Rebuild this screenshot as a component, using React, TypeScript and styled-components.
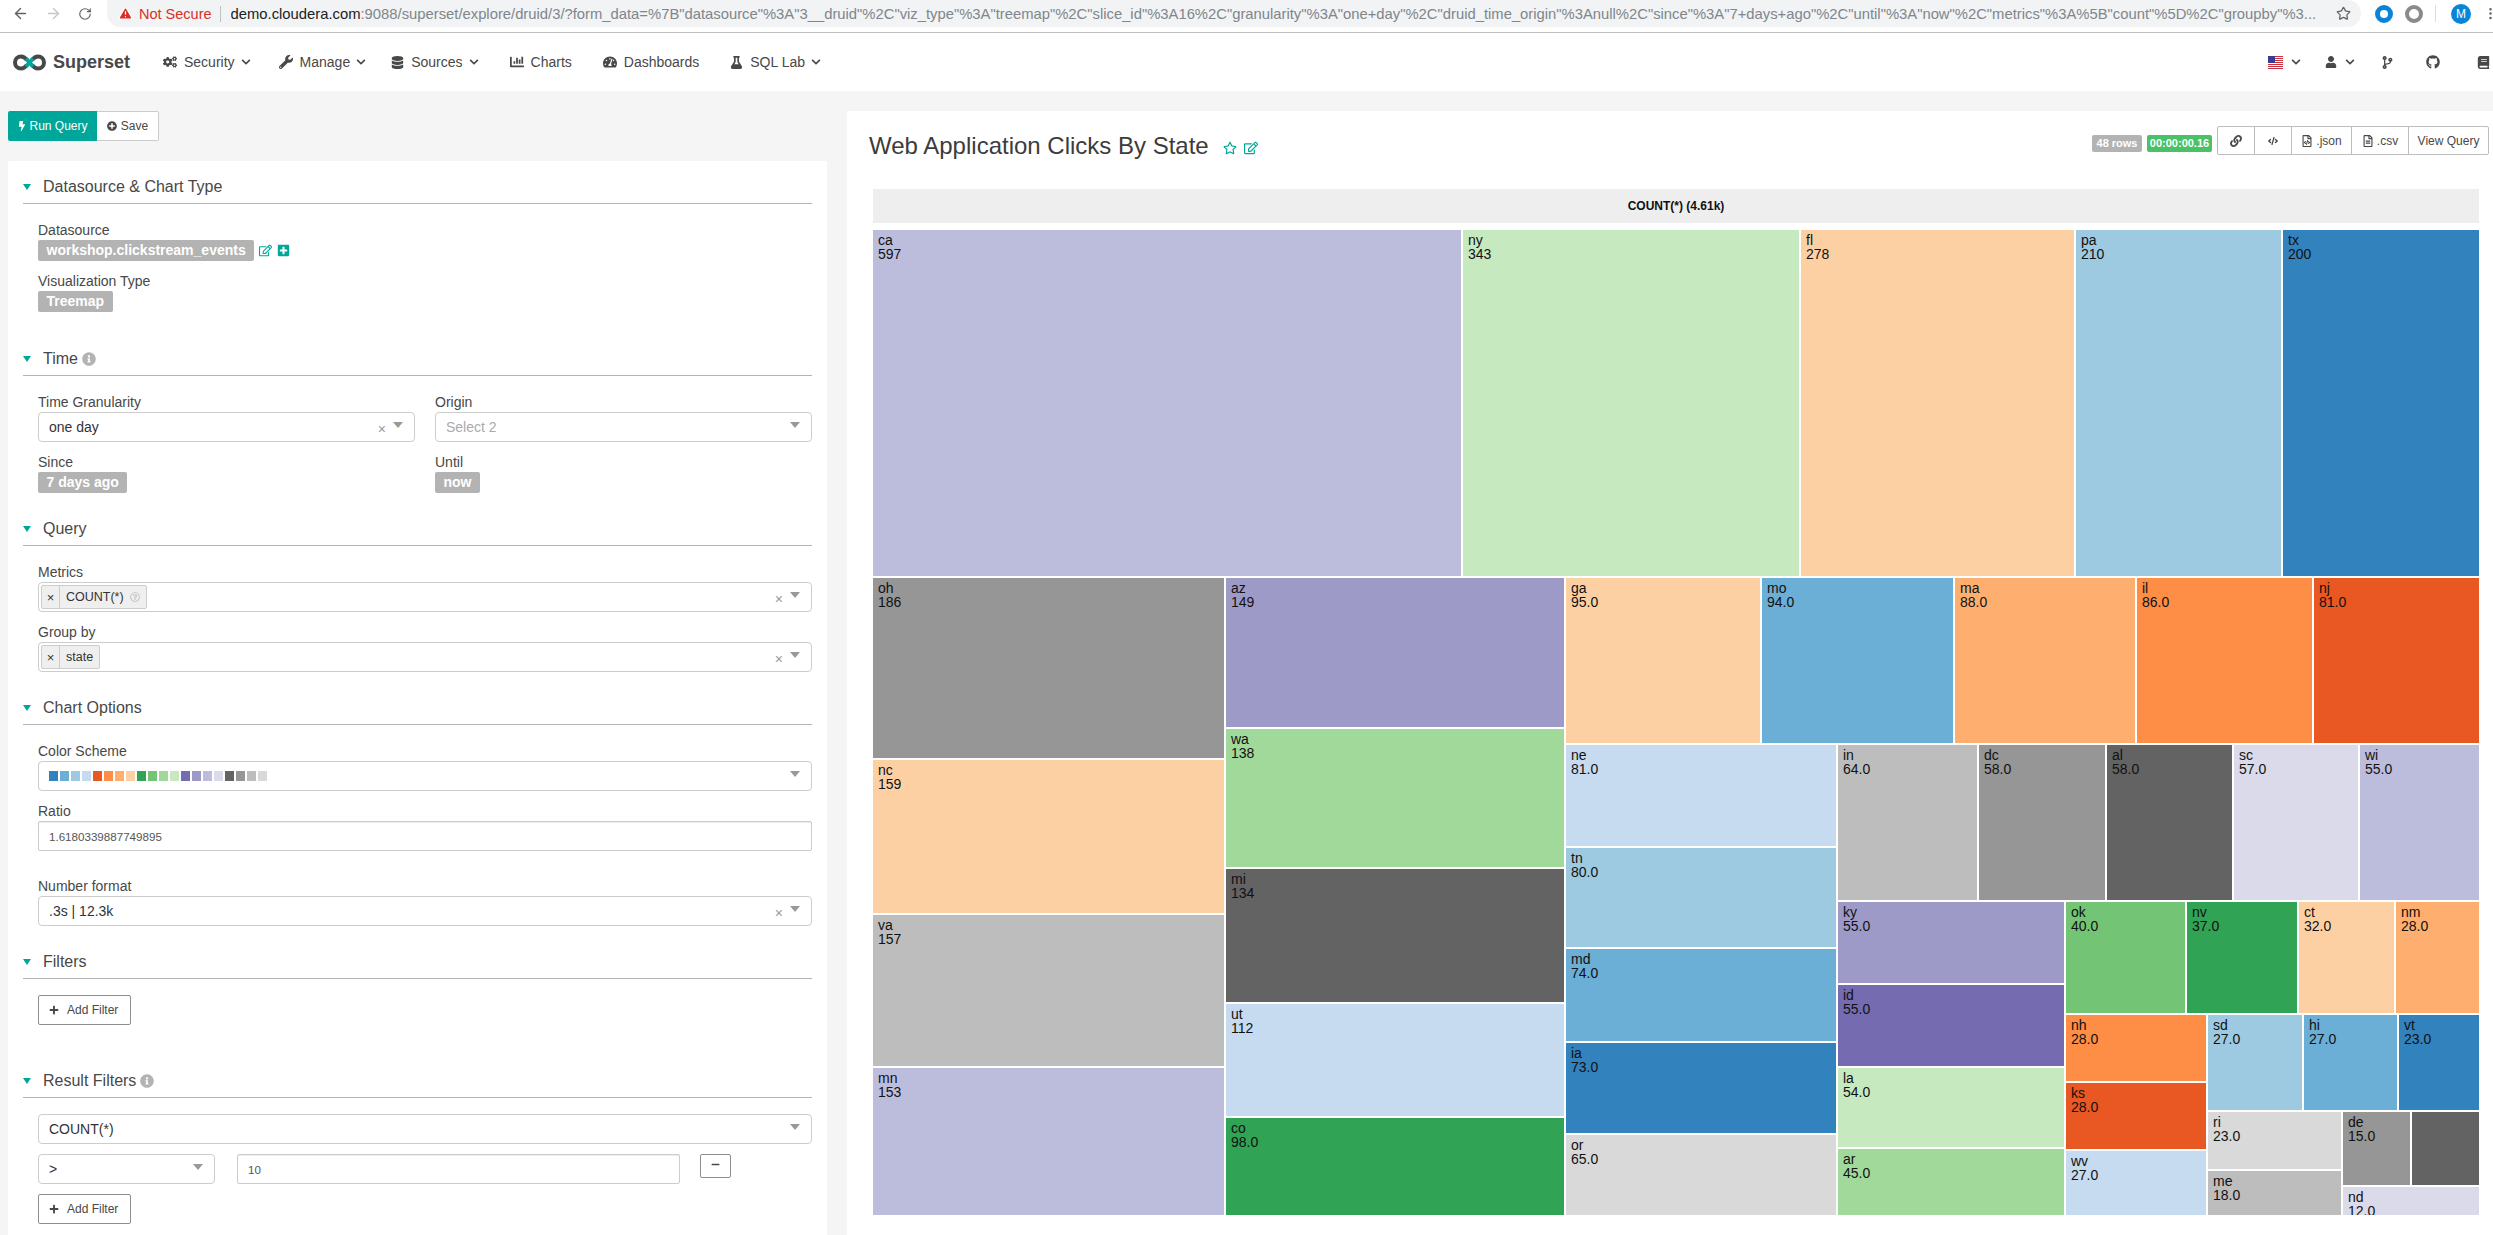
import React from "react";
import styled, { createGlobalStyle } from "styled-components";
import {
  FaBolt, FaBook, FaChartBar, FaChevronDown, FaCodeBranch, FaCode, FaCogs, FaDatabase, FaFlask, FaGithub,
  FaInfoCircle, FaLink, FaMinus, FaPlus, FaPlusCircle, FaPlusSquare, FaRegEdit, FaRegFileAlt, FaRegFileCode,
  FaRegQuestionCircle, FaRegStar, FaTachometerAlt, FaUser, FaWrench,
} from "react-icons/fa";
import { ArrowLeft, ArrowRight, EllipsisVertical, RotateCw, Star, TriangleAlert } from "lucide-react";

const TEAL = "#00a699";
const INK = "#484848";

const GlobalStyle = createGlobalStyle`
  html, body { margin: 0; padding: 0; height: 100%; overflow: hidden; background: #f5f5f5; }
  body { font-family: "Liberation Sans", Arial, sans-serif; color: ${INK}; }
  * { box-sizing: border-box; }
`;

const Page = styled.div`
  width: 2493px;
  height: 1235px;
  display: flex;
  flex-direction: column;
  overflow: hidden;
`;

/* Browser chrome */
const BrowserBar = styled.div`
  height: 33px;
  flex: none;
  display: flex;
  align-items: flex-start;
  background: #fff;
  border-bottom: 1px solid #bdbdbd;
`;
const BrowserNav = styled.div`
  width: 107px;
  height: 27px;
  padding-left: 12px;
  display: flex;
  align-items: center;
  gap: 16px;
  flex: none;
`;
const AddressPill = styled.div`
  width: 2254px;
  height: 27px;
  flex: none;
  display: flex;
  align-items: center;
  background: #f1f3f4;
  border-radius: 0 14px 14px 14px;
  padding: 0 10px 0 11px;
  font-size: 14px;
  white-space: nowrap;
`;
const NotSecure = styled.span`
  color: #d93025;
  margin-left: 6px;
  font-size: 14.5px;
`;
const AddressDivider = styled.span`
  width: 1px;
  height: 16px;
  background: #bdc1c6;
  margin: 0 10px 0 8px;
`;
const Url = styled.span`
  color: #80868b;
  flex: none;
  width: 2095px;
  overflow: hidden;
  font-size: 14.8px;
  b { color: #202124; font-weight: 400; }
`;
const UrlStar = styled.span`
  display: flex;
  margin-left: auto;
  color: #5f6368;
`;
const BrowserExt = styled.div`
  height: 27px;
  display: flex;
  align-items: center;
  padding-left: 14px;
  gap: 12px;
`;
const ExtRing = styled.span<{ $color: string; $border: number }>`
  width: 18px;
  height: 18px;
  border-radius: 50%;
  border: ${(p) => p.$border}px solid ${(p) => p.$color};
  background: #fff;
`;
const ExtDivider = styled.span`
  width: 1px;
  height: 17px;
  background: #dadce0;
`;
const Avatar = styled.span`
  width: 20px;
  height: 20px;
  border-radius: 50%;
  background: #0a84d6;
  color: #fff;
  font-size: 12px;
  display: flex;
  align-items: center;
  justify-content: center;
  margin-left: 3px;
`;

/* Superset navbar */
const Navbar = styled.nav`
  height: 58px;
  flex: none;
  display: flex;
  align-items: center;
  background: #fff;
  padding: 0 3px 0 13px;
`;
const Brand = styled.div`
  display: flex;
  align-items: center;
  gap: 7px;
  width: 150px;
  font-size: 18px;
  font-weight: 700;
  color: ${INK};
`;
const NavList = styled.div`
  display: flex;
  align-items: center;
`;
const NavItem = styled.span<{ $after: number }>`
  display: flex;
  align-items: center;
  gap: 7px;
  font-size: 14px;
  color: ${INK};
  margin-right: ${(p) => p.$after}px;
  svg { flex: none; }
`;
const Caret = styled(FaChevronDown)`
  width: 10px;
  height: 10px;
  margin-left: -1px;
`;
const NavRight = styled.div`
  margin-left: auto;
  display: flex;
  align-items: center;
  color: ${INK};
  height: 100%;
`;
const NavGroup = styled.span<{ $width: number }>`
  width: ${(p) => p.$width}px;
  display: flex;
  align-items: center;
  gap: 9px;
  svg { flex: none; }
`;

/* Main area */
const Main = styled.main`
  flex: 1;
  min-height: 0;
  display: grid;
  grid-template-columns: 819px 1fr;
  column-gap: 20px;
  padding: 20px 0 0 8px;
`;
const LeftColumn = styled.div`
  display: flex;
  flex-direction: column;
  min-height: 0;
`;
const QueryBar = styled.div`
  height: 30px;
  flex: none;
  display: flex;
  margin-bottom: 20px;
`;
const RunButton = styled.button`
  width: 89px;
  height: 30px;
  border: 0;
  border-radius: 2px 0 0 2px;
  background: ${TEAL};
  color: #fff;
  font: 12px "Liberation Sans", Arial, sans-serif;
  display: flex;
  align-items: center;
  justify-content: center;
  gap: 2px;
  padding: 0;
`;
const SaveButton = styled.button`
  width: 62px;
  height: 30px;
  border: 1px solid #ccc;
  border-left: 0;
  border-radius: 0 2px 2px 0;
  background: #fff;
  color: ${INK};
  font: 12px "Liberation Sans", Arial, sans-serif;
  display: flex;
  align-items: center;
  justify-content: center;
  gap: 4px;
  padding: 0;
`;
const ControlPanel = styled.div`
  flex: 1;
  min-height: 0;
  overflow: hidden;
  background: #fff;
  border-radius: 2px 2px 0 0;
`;
const Section = styled.section<{ $extra?: number }>`
  padding: 14px 15px ${(p) => p.$extra ?? 0}px;
`;
const SectionHeader = styled.h2`
  margin: 0;
  height: 29px;
  display: flex;
  align-items: flex-start;
  border-bottom: 1px solid #b3b3b3;
  font-size: 16px;
  font-weight: 400;
  line-height: 24px;
  color: ${INK};
`;
const Triangle = styled.span`
  width: 0;
  height: 0;
  margin: 9px 12px 0 0;
  border-left: 4.5px solid transparent;
  border-right: 4.5px solid transparent;
  border-top: 6px solid ${TEAL};
`;
const InfoIcon = styled(FaInfoCircle)`
  color: #b3b3b3;
  width: 14px;
  height: 14px;
  margin: 5px 0 0 4px;
`;
const SectionBody = styled.div`
  padding: 16px 0 0 15px;
`;
const Field = styled.div<{ $after?: number }>`
  margin-bottom: ${(p) => p.$after ?? 10}px;
`;
const FieldGrid = styled.div`
  display: grid;
  grid-template-columns: 377px 377px;
  column-gap: 20px;
`;
const Label = styled.label`
  display: block;
  height: 20px;
  line-height: 20px;
  font-size: 14px;
  color: ${INK};
`;
const BadgeRow = styled.div`
  display: flex;
  align-items: center;
  height: 21px;
  gap: 5px;
`;
const ValueBadge = styled.span`
  display: inline-block;
  height: 21px;
  line-height: 21px;
  padding: 0 8.5px;
  background: #b3b3b3;
  color: #fff;
  font-size: 14px;
  font-weight: 700;
  border-radius: 2px;
`;
const SelectBox = styled.div<{ $tagged?: boolean; $width?: number }>`
  height: 30px;
  width: ${(p) => (p.$width ? `${p.$width}px` : "100%")};
  display: flex;
  align-items: center;
  padding: 0 11px 0 ${(p) => (p.$tagged ? 2 : 10)}px;
  border: 1px solid #ccc;
  border-radius: 4px;
  background: #fff;
  font-size: 14px;
  color: ${INK};
  flex: none;
`;
const SelectValue = styled.span<{ $placeholder?: boolean }>`
  flex: 1;
  display: flex;
  align-items: center;
  color: ${(p) => (p.$placeholder ? "#aaa" : "#333")};
`;
const ClearMark = styled.span`
  color: #999;
  font-size: 14px;
  margin-right: 7px;
  line-height: 14px;
  padding-top: 3px;
`;
const SelectArrow = styled.span`
  width: 0;
  height: 0;
  margin-bottom: 4px;
  border-left: 5px solid transparent;
  border-right: 5px solid transparent;
  border-top: 6px solid #999;
`;
const Tag = styled.span`
  height: 24px;
  display: inline-flex;
  align-items: center;
  background: #efefef;
  border: 1px solid #ccc;
  border-radius: 2px;
  font-size: 12.5px;
  color: #333;
`;
const TagRemove = styled.span`
  width: 18px;
  height: 100%;
  display: flex;
  align-items: center;
  justify-content: center;
  border-right: 1px solid #ccc;
  font-size: 13px;
`;
const TagText = styled.span`
  padding: 0 6px;
  display: flex;
  align-items: center;
  gap: 6px;
  svg { color: #c4c4c4; width: 10px; height: 10px; }
`;
const SwatchRow = styled.span`
  display: flex;
  gap: 2px;
`;
const Swatch = styled.span<{ $color: string }>`
  width: 9px;
  height: 10px;
  background: ${(p) => p.$color};
`;
const TextInput = styled.div<{ $width?: number }>`
  height: 30px;
  width: ${(p) => (p.$width ? `${p.$width}px` : "100%")};
  display: flex;
  align-items: center;
  padding-left: 10px;
  border: 1px solid #ccc;
  border-radius: 2px;
  box-shadow: inset 0 1px 1px rgba(0, 0, 0, 0.075);
  background: #fff;
  color: #555;
  font-size: 11.6px;
  flex: none;
`;
const AddButton = styled.button`
  width: 93px;
  height: 30px;
  display: flex;
  align-items: center;
  gap: 8px;
  padding: 0 0 0 10px;
  border: 1px solid #8e8e8e;
  border-radius: 2px;
  background: #fff;
  color: ${INK};
  font: 12px "Liberation Sans", Arial, sans-serif;
  svg { width: 10px; height: 10px; }
`;
const FilterRow = styled.div`
  display: flex;
  align-items: flex-start;
  gap: 22px;
  margin-bottom: 10px;
`;
const MinusButton = styled.button`
  width: 31px;
  height: 24px;
  margin-left: -2px;
  display: flex;
  align-items: center;
  justify-content: center;
  padding: 0;
  border: 1px solid #8e8e8e;
  border-radius: 2px;
  background: #fff;
  color: ${INK};
  svg { width: 9px; height: 9px; margin-bottom: 3px; }
`;

/* Chart panel */
const ChartPanel = styled.section`
  background: #fff;
  border-radius: 2px 0 0 0;
  min-width: 0;
  overflow: hidden;
`;
const ChartHeader = styled.header`
  height: 45px;
  padding: 15px 4px 0 22px;
  display: flex;
  align-items: flex-start;
`;
const ChartTitle = styled.h1`
  margin: 6px 0 0;
  font-size: 24px;
  line-height: 28px;
  font-weight: 400;
  color: #3c3c3c;
  white-space: nowrap;
`;
const TitleIcons = styled.span`
  display: flex;
  align-items: center;
  gap: 7px;
  margin: 15px 0 0 14px;
  color: ${TEAL};
  svg { width: 14px; height: 14px; }
`;
const ChartMeta = styled.div`
  margin-left: auto;
  display: flex;
  align-items: flex-start;
`;
const StatusBadge = styled.span<{ $color: string; $width: number }>`
  width: ${(p) => p.$width}px;
  height: 17px;
  line-height: 17px;
  margin: 9px 5px 0 0;
  background: ${(p) => p.$color};
  color: #fff;
  font-size: 11px;
  font-weight: 700;
  text-align: center;
  border-radius: 2px;
  white-space: nowrap;
`;
const ButtonGroup = styled.div`
  height: 29px;
  display: flex;
  border: 1px solid #bdbdbd;
  border-radius: 2px;
`;
const GroupButton = styled.span<{ $width: number; $icon?: number }>`
  width: ${(p) => p.$width}px;
  display: flex;
  align-items: center;
  justify-content: center;
  gap: 3px;
  font-size: 12px;
  color: ${INK};
  border-left: 1px solid #bdbdbd;
  &:first-child { border-left: 0; }
  svg { width: ${(p) => p.$icon ?? 12}px; height: ${(p) => p.$icon ?? 12}px; }
`;
const TreemapSvg = styled.svg`
  display: block;
  margin: 33px 0 0 26px;
  font-family: "Liberation Sans", Arial, sans-serif;
`;

const RED = "#e95822";
const ORANGE = "#fe8d45";
const TAN = "#feae6e";
const PEACH = "#fdd0a4";

const PALETTE = [
  "#3182bd", "#6baed6", "#9ecae1", "#c6dbef", RED, ORANGE, TAN, PEACH, "#31a354", "#74c476",
  "#a1d99b", "#c7e9c0", "#756bb1", "#9e9ac8", "#bcbddc", "#dadaeb", "#636363", "#969696", "#bdbdbd", "#d9d9d9",
];

type Cell = [string, string, number, number, number, number, string];
const CELLS: Cell[] = [
  ["ca", "597", 873, 230, 1461, 576, "#bcbddc"],
  ["ny", "343", 1463, 230, 1799, 576, "#c7e9c0"],
  ["fl", "278", 1801, 230, 2074, 576, PEACH],
  ["pa", "210", 2076, 230, 2281, 576, "#9ecae1"],
  ["tx", "200", 2283, 230, 2479, 576, "#3182bd"],
  ["oh", "186", 873, 578, 1224, 758, "#969696"],
  ["nc", "159", 873, 760, 1224, 913, PEACH],
  ["va", "157", 873, 915, 1224, 1066, "#bdbdbd"],
  ["mn", "153", 873, 1068, 1224, 1215, "#bcbddc"],
  ["az", "149", 1226, 578, 1564, 727, "#9e9ac8"],
  ["wa", "138", 1226, 729, 1564, 867, "#a1d99b"],
  ["mi", "134", 1226, 869, 1564, 1002, "#636363"],
  ["ut", "112", 1226, 1004, 1564, 1116, "#c6dbef"],
  ["co", "98.0", 1226, 1118, 1564, 1215, "#31a354"],
  ["ga", "95.0", 1566, 578, 1760, 743, PEACH],
  ["mo", "94.0", 1762, 578, 1953, 743, "#6baed6"],
  ["ma", "88.0", 1955, 578, 2135, 743, TAN],
  ["il", "86.0", 2137, 578, 2312, 743, ORANGE],
  ["nj", "81.0", 2314, 578, 2479, 743, RED],
  ["ne", "81.0", 1566, 745, 1836, 846, "#c6dbef"],
  ["tn", "80.0", 1566, 848, 1836, 947, "#9ecae1"],
  ["md", "74.0", 1566, 949, 1836, 1041, "#6baed6"],
  ["ia", "73.0", 1566, 1043, 1836, 1133, "#3182bd"],
  ["or", "65.0", 1566, 1135, 1836, 1215, "#d9d9d9"],
  ["in", "64.0", 1838, 745, 1977, 900, "#bdbdbd"],
  ["dc", "58.0", 1979, 745, 2105, 900, "#969696"],
  ["al", "58.0", 2107, 745, 2232, 900, "#636363"],
  ["sc", "57.0", 2234, 745, 2358, 900, "#dadaeb"],
  ["wi", "55.0", 2360, 745, 2479, 900, "#bcbddc"],
  ["ky", "55.0", 1838, 902, 2064, 983, "#9e9ac8"],
  ["id", "55.0", 1838, 985, 2064, 1066, "#756bb1"],
  ["la", "54.0", 1838, 1068, 2064, 1147, "#c7e9c0"],
  ["ar", "45.0", 1838, 1149, 2064, 1215, "#a1d99b"],
  ["ok", "40.0", 2066, 902, 2185, 1013, "#74c476"],
  ["nv", "37.0", 2187, 902, 2297, 1013, "#31a354"],
  ["ct", "32.0", 2299, 902, 2394, 1013, PEACH],
  ["nm", "28.0", 2396, 902, 2479, 1013, TAN],
  ["nh", "28.0", 2066, 1015, 2206, 1081, ORANGE],
  ["ks", "28.0", 2066, 1083, 2206, 1149, RED],
  ["wv", "27.0", 2066, 1151, 2206, 1215, "#c6dbef"],
  ["sd", "27.0", 2208, 1015, 2302, 1110, "#9ecae1"],
  ["hi", "27.0", 2304, 1015, 2397, 1110, "#6baed6"],
  ["vt", "23.0", 2399, 1015, 2479, 1110, "#3182bd"],
  ["ri", "23.0", 2208, 1112, 2341, 1169, "#d9d9d9"],
  ["me", "18.0", 2208, 1171, 2341, 1215, "#bdbdbd"],
  ["de", "15.0", 2343, 1112, 2410, 1185, "#969696"],
  ["", "", 2412, 1112, 2479, 1185, "#636363"],
  ["nd", "12.0", 2343, 1187, 2479, 1215, "#dadaeb"],
];

const URL_TAIL =
  ':9088/superset/explore/druid/3/?form_data=%7B"datasource"%3A"3__druid"%2C"viz_type"%3A"treemap"%2C"slice_id"%3A16%2C"granularity"%3A"one+day"%2C"druid_time_origin"%3Anull%2C"since"%3A"7+days+ago"%2C"until"%3A"now"%2C"metrics"%3A%5B"count"%5D%2C"groupby"%3...';

const Logo = () => (
  <svg width="33" height="17" viewBox="0 0 33 17" fill="none" strokeWidth="4">
    <path d="M14 6 C12 3.5 10.5 2.5 8 2.5 A6 6 0 0 0 8 14.5 C10.5 14.5 12 13.5 14 11" stroke={INK} />
    <path d="M19 11 C21 13.5 22.5 14.5 25 14.5 A6 6 0 0 0 25 2.5 C22.5 2.5 21 3.5 19 6" stroke={INK} />
    <path d="M13 4.5 L20 12.5" stroke={TEAL} />
    <path d="M13 12.5 L20 4.5" stroke={TEAL} />
  </svg>
);

const UsFlag = () => (
  <svg width="15" height="13" viewBox="0 0 15 13">
    <rect width="15" height="13" fill="#fff" />
    {[0, 2, 4, 6, 8, 10, 12].map((y) => (
      <rect key={y} y={y} width="15" height="1" fill="#c8313e" />
    ))}
    <rect width="7" height="7" fill="#3c3b8e" />
  </svg>
);

const Clear = () => <ClearMark>×</ClearMark>;

type SectionProps = { title: string; info?: boolean; extra?: number; children: React.ReactNode };
const PanelSection = ({ title, info, extra, children }: SectionProps) => (
  <Section $extra={extra}>
    <SectionHeader>
      <Triangle />
      {title}
      {info && <InfoIcon />}
    </SectionHeader>
    <SectionBody>{children}</SectionBody>
  </Section>
);

const AddFilter = () => (
  <AddButton>
    <FaPlus />
    Add Filter
  </AddButton>
);

export default function App() {
  return (
    <Page>
      <GlobalStyle />
      <BrowserBar>
        <BrowserNav>
          <ArrowLeft size={17} color="#5f6368" />
          <ArrowRight size={17} color="#c4c7ca" />
          <RotateCw size={14} color="#5f6368" />
        </BrowserNav>
        <AddressPill>
          <TriangleAlert size={15} color="#fff" fill="#d93025" />
          <NotSecure>Not Secure</NotSecure>
          <AddressDivider />
          <Url>
            <b>demo.cloudera.com</b>
            {URL_TAIL}
          </Url>
          <UrlStar>
            <Star size={15} />
          </UrlStar>
        </AddressPill>
        <BrowserExt>
          <ExtRing $color="#0a84d6" $border={5} />
          <ExtRing $color="#8a8a8a" $border={4} />
          <ExtDivider />
          <Avatar>M</Avatar>
          <EllipsisVertical size={15} color="#5f6368" />
        </BrowserExt>
      </BrowserBar>

      <Navbar>
        <Brand>
          <Logo />
          Superset
        </Brand>
        <NavList>
          <NavItem $after={28}>
            <FaCogs size={14} />
            Security
            <Caret />
          </NavItem>
          <NavItem $after={25}>
            <FaWrench size={14} />
            Manage
            <Caret />
          </NavItem>
          <NavItem $after={31}>
            <FaDatabase size={13} />
            Sources
            <Caret />
          </NavItem>
          <NavItem $after={31}>
            <FaChartBar size={14} />
            Charts
          </NavItem>
          <NavItem $after={31}>
            <FaTachometerAlt size={14} />
            Dashboards
          </NavItem>
          <NavItem $after={0}>
            <FaFlask size={13} />
            SQL Lab
            <Caret />
          </NavItem>
        </NavList>
        <NavRight>
          <NavGroup $width={57}>
            <UsFlag />
            <Caret />
          </NavGroup>
          <NavGroup $width={56}>
            <FaUser size={12} />
            <Caret />
          </NavGroup>
          <NavGroup $width={45}>
            <FaCodeBranch size={13} />
          </NavGroup>
          <NavGroup $width={51}>
            <FaGithub size={14} />
          </NavGroup>
          <NavGroup $width={13}>
            <FaBook size={13} />
          </NavGroup>
        </NavRight>
      </Navbar>

      <Main>
        <LeftColumn>
          <QueryBar>
            <RunButton>
              <FaBolt size={10} />
              Run Query
            </RunButton>
            <SaveButton>
              <FaPlusCircle size={10} />
              Save
            </SaveButton>
          </QueryBar>
          <ControlPanel>
            <PanelSection title="Datasource & Chart Type" extra={11}>
              <Field>
                <Label>Datasource</Label>
                <BadgeRow>
                  <ValueBadge>workshop.clickstream_events</ValueBadge>
                  <FaRegEdit size={13} color={TEAL} />
                  <FaPlusSquare size={13} color={TEAL} />
                </BadgeRow>
              </Field>
              <Field>
                <Label>Visualization Type</Label>
                <ValueBadge>Treemap</ValueBadge>
              </Field>
            </PanelSection>

            <PanelSection title="Time" info>
              <FieldGrid>
                <Field>
                  <Label>Time Granularity</Label>
                  <SelectBox>
                    <SelectValue>one day</SelectValue>
                    <Clear />
                    <SelectArrow />
                  </SelectBox>
                </Field>
                <Field>
                  <Label>Origin</Label>
                  <SelectBox>
                    <SelectValue $placeholder>Select 2</SelectValue>
                    <SelectArrow />
                  </SelectBox>
                </Field>
                <Field>
                  <Label>Since</Label>
                  <ValueBadge>7 days ago</ValueBadge>
                </Field>
                <Field>
                  <Label>Until</Label>
                  <ValueBadge>now</ValueBadge>
                </Field>
              </FieldGrid>
            </PanelSection>

            <PanelSection title="Query">
              <Field>
                <Label>Metrics</Label>
                <SelectBox $tagged>
                  <SelectValue>
                    <Tag>
                      <TagRemove>×</TagRemove>
                      <TagText>
                        COUNT(*)
                        <FaRegQuestionCircle />
                      </TagText>
                    </Tag>
                  </SelectValue>
                  <Clear />
                  <SelectArrow />
                </SelectBox>
              </Field>
              <Field>
                <Label>Group by</Label>
                <SelectBox $tagged>
                  <SelectValue>
                    <Tag>
                      <TagRemove>×</TagRemove>
                      <TagText>state</TagText>
                    </Tag>
                  </SelectValue>
                  <Clear />
                  <SelectArrow />
                </SelectBox>
              </Field>
            </PanelSection>

            <PanelSection title="Chart Options">
              <Field>
                <Label>Color Scheme</Label>
                <SelectBox>
                  <SelectValue>
                    <SwatchRow>
                      {PALETTE.map((c) => (
                        <Swatch key={c} $color={c} />
                      ))}
                    </SwatchRow>
                  </SelectValue>
                  <SelectArrow />
                </SelectBox>
              </Field>
              <Field $after={25}>
                <Label>Ratio</Label>
                <TextInput>1.6180339887749895</TextInput>
              </Field>
              <Field>
                <Label>Number format</Label>
                <SelectBox>
                  <SelectValue>.3s | 12.3k</SelectValue>
                  <Clear />
                  <SelectArrow />
                </SelectBox>
              </Field>
            </PanelSection>

            <PanelSection title="Filters" extra={20}>
              <Field>
                <AddFilter />
              </Field>
            </PanelSection>

            <PanelSection title="Result Filters" info>
              <Field>
                <SelectBox>
                  <SelectValue>COUNT(*)</SelectValue>
                  <SelectArrow />
                </SelectBox>
              </Field>
              <FilterRow>
                <SelectBox $width={177}>
                  <SelectValue>&gt;</SelectValue>
                  <SelectArrow />
                </SelectBox>
                <TextInput $width={443}>10</TextInput>
                <MinusButton>
                  <FaMinus />
                </MinusButton>
              </FilterRow>
              <AddFilter />
            </PanelSection>
          </ControlPanel>
        </LeftColumn>

        <ChartPanel>
          <ChartHeader>
            <ChartTitle>Web Application Clicks By State</ChartTitle>
            <TitleIcons>
              <FaRegStar />
              <FaRegEdit />
            </TitleIcons>
            <ChartMeta>
              <StatusBadge $color="#b3b3b3" $width={50}>48 rows</StatusBadge>
              <StatusBadge $color="#48c167" $width={65}>00:00:00.16</StatusBadge>
              <ButtonGroup>
                <GroupButton $width={36}>
                  <FaLink />
                </GroupButton>
                <GroupButton $width={37} $icon={10}>
                  <FaCode />
                </GroupButton>
                <GroupButton $width={60}>
                  <FaRegFileCode />
                  .json
                </GroupButton>
                <GroupButton $width={57}>
                  <FaRegFileAlt />
                  .csv
                </GroupButton>
                <GroupButton $width={80}>View Query</GroupButton>
              </ButtonGroup>
            </ChartMeta>
          </ChartHeader>
          <TreemapSvg width="1606" height="1026" viewBox="873 189 1606 1026">
            <rect x="873" y="189" width="1606" height="34" fill="#eee" />
            <text x="1676" y="210" textAnchor="middle" fontSize="12" fontWeight="700" fill="#111">
              COUNT(*) (4.61k)
            </text>
            {CELLS.map(([name, value, x0, y0, x1, y1, color]) => (
              <g key={`${x0}-${y0}`}>
                <rect x={x0} y={y0} width={x1 - x0} height={y1 - y0} fill={color} />
                <text x={x0 + 5} y={y0 + 15} fontSize="14" fill="#111">
                  {name}
                </text>
                <text x={x0 + 5} y={y0 + 29} fontSize="14" fill="#111">
                  {value}
                </text>
              </g>
            ))}
          </TreemapSvg>
        </ChartPanel>
      </Main>
    </Page>
  );
}
